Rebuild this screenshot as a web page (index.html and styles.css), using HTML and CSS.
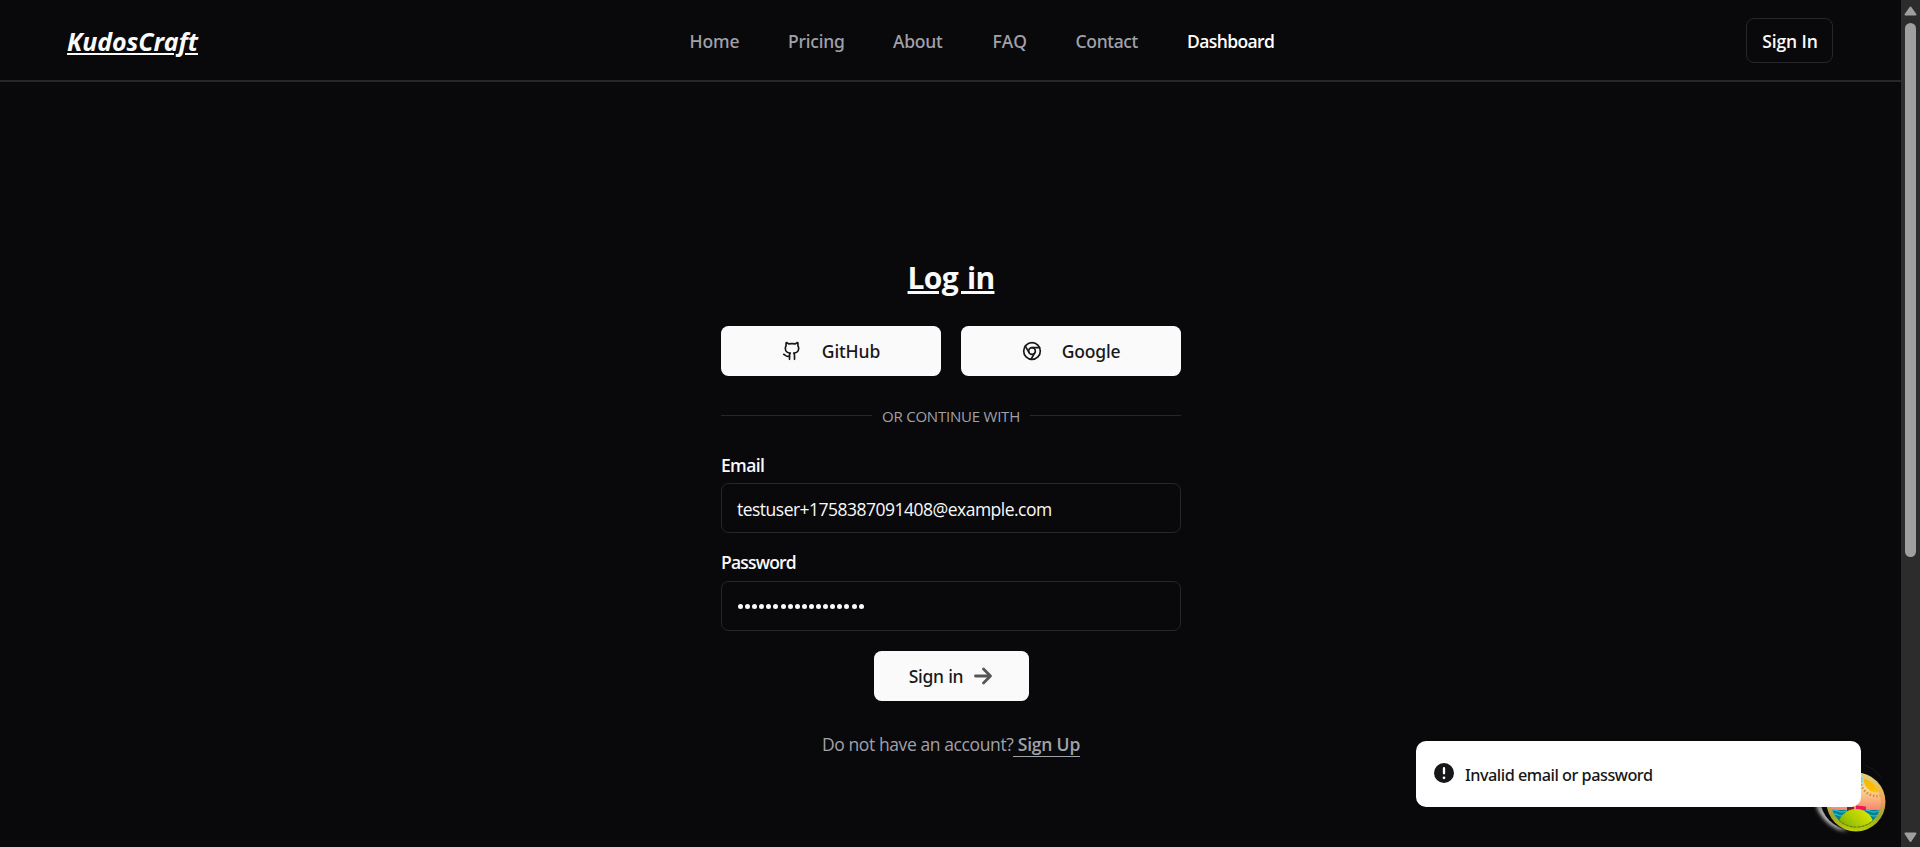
FILE: index.html
```html
<!DOCTYPE html>
<html lang="en">
<head>
<meta charset="utf-8">
<title>KudosCraft</title>
<link rel="stylesheet" href="styles.css">
</head>
<body>
<div class="page">
  <header class="header">
    <a class="logo">KudosCraft</a>
    <nav class="nav">
      <a class="home">Home</a>
      <a class="pricing">Pricing</a>
      <a class="about">About</a>
      <a class="faq">FAQ</a>
      <a class="contact">Contact</a>
      <a class="dashboard">Dashboard</a>
    </nav>
    <button class="header-signin">Sign In</button>
  </header>
  <main class="login">
    <h1 class="title">Log in</h1>
    <div class="providers">
      <button class="provider">
        <svg class="icon" viewBox="0 0 24 24"><path d="M15 22v-4a4.8 4.8 0 0 0-1-3.5c3 0 6-2 6-5.500.08-1.250-.27-2.480-1-3.500.28-1.150.28-2.350 0-3.500 0 0-1 0-3 1.500-2.640-.5-5.360-.5-8 0C6 2 5 2 5 2c-.3 1.150-.3 2.350 0 3.500A5.403 5.403 0 0 0 4 9c0 3.500 3 5.500 6 5.500-.39.49-.68 1.050-.85 1.650-.17.6-.22 1.230-.15 1.850v4"/><path d="M9 18c-4.510 2-5-2-7-2"/></svg>
        <span class="github-text">GitHub</span>
      </button>
      <button class="provider">
        <svg class="icon" viewBox="0 0 24 24"><circle cx="12" cy="12" r="10"/><circle cx="12" cy="12" r="4"/><path d="M21.170 8H12M3.950 6.060L8.540 14M10.880 21.940L15.460 14"/></svg>
        <span class="google-text">Google</span>
      </button>
    </div>
    <div class="divider"><span>OR CONTINUE WITH</span></div>
    <form class="form">
      <label class="label label-email">Email</label>
      <div class="field"><span class="email-value">testuser+1758387091408@example.com</span></div>
      <label class="label label-password">Password</label>
      <div class="field">
        <span class="dots"><i></i><i></i><i></i><i></i><i></i><i></i><i></i><i></i><i></i><i></i><i></i><i></i><i></i><i></i><i></i><i></i><i></i><i></i></span>
      </div>
      <button class="submit" type="button"><span>Sign in</span>
        <svg class="arrow" viewBox="0 0 20 20"><path d="M2.500 10H17M10.500 3L17.500 10L10.500 17"/></svg>
      </button>
    </form>
    <p class="signup"><span class="question">Do not have an account?</span><a class="signup-link">&nbsp;Sign Up</a></p>
  </main>
</div>

<div class="scrollbar">
  <svg class="scroll-arrow" viewBox="0 0 19 23"><path d="M9.500 7.500L14.500 14.500H4.500Z"/></svg>
  <div class="thumb"></div>
  <svg class="scroll-arrow" viewBox="0 0 19 23"><path d="M9.500 17L14.500 9.500H4.500Z"/></svg>
</div>

<svg class="devtools" viewBox="0 0 90 90">
  <defs>
    <linearGradient id="ring" x1="0" y1="0" x2="0" y2="1"><stop offset="0" stop-color="#d9d283"/><stop offset=".25" stop-color="#e8c05e"/><stop offset=".5" stop-color="#e9a05c"/><stop offset=".75" stop-color="#99a82d"/><stop offset="1" stop-color="#bfd000"/></linearGradient>
    <linearGradient id="sky" x1="0" y1="0" x2="0" y2="1"><stop offset="0" stop-color="#70dcef"/><stop offset=".22" stop-color="#eee0a5"/><stop offset=".48" stop-color="#f9ad7b"/><stop offset=".7" stop-color="#ff7771"/></linearGradient>
    <linearGradient id="hill" x1="1" y1="0" x2="0" y2="1"><stop offset="0" stop-color="#e8ef00"/><stop offset=".45" stop-color="#aaca00"/><stop offset="1" stop-color="#468a00"/></linearGradient>
    <linearGradient id="sun" x1="0" y1="0" x2="0" y2="1"><stop offset="0" stop-color="#ffa400"/><stop offset="1" stop-color="#ffc400"/></linearGradient>
    <clipPath id="scene"><circle cx="51" cy="47" r="25"/></clipPath>
    <filter id="soft" x="-50%" y="-50%" width="200%" height="200%"><feGaussianBlur stdDeviation="2.200"/></filter>
  </defs>
  <path d="M11 49Q17 66 33 74L43 76Q25 68 15 50Z" fill="#fff" filter="url(#soft)"/>
  <circle cx="46" cy="44" r="30.500" fill="#09090b"/>
  <path d="M60 10Q69 13 76 22" fill="none" stroke="#18181a"/>
  <circle cx="51" cy="47" r="29.500" fill="url(#ring)"/>
  <g clip-path="url(#scene)">
    <circle cx="51" cy="47" r="25" fill="url(#sky)"/>
    <circle cx="71.500" cy="25" r="12.500" fill="url(#sun)"/>
    <circle cx="71.500" cy="25" r="16" fill="none" stroke="#f57c1c" stroke-width="2.500" stroke-dasharray="1.400 2"/>
    <path d="M25 55H78V74H25Z" fill="#087e8d"/>
    <path d="M25 56q4-2 8 0t8 0 8 0 8 0 8 0 8 0 8 0M25 60q4-2 8 0t8 0 8 0 8 0 8 0 8 0 8 0" fill="none" stroke="#14c5d4" stroke-width="1.300"/>
    <path d="M42 52h7v4h-7Z" fill="#702a22"/>
    <path d="M51 50.500l10 1v4H51Z" fill="#ed185d"/>
    <circle cx="51" cy="72" r="18" fill="url(#hill)"/>
  </g>
  <path d="M34 65.500A25 25 0 0 0 68 65.500" fill="none" stroke="#466f00" stroke-width=".8" stroke-dasharray="3 1"/>
</svg>

<div class="toast">
  <svg class="alert" viewBox="0 0 20 20"><path fill="#171719" fill-rule="evenodd" d="M20 10a10 10 0 1 1-20 0 10 10 0 0 1 20 0ZM10 4a1.150 1.150 0 0 0-1.150 1.150v5.200a1.150 1.150 0 0 0 2.300 0v-5.200A1.150 1.150 0 0 0 10 4ZM10 16.200a1.350 1.350 0 1 0 0-2.700 1.350 1.350 0 0 0 0 2.700Z"/></svg>
  <span>Invalid email or password</span>
</div>
</body>
</html>
```

FILE: styles.css
```css
* { box-sizing: border-box; }
body {
  margin: 0;
  width: 1920px;
  height: 847px;
  overflow: hidden;
  display: flex;
  background: #09090b;
  color: #fafafa;
  font: 400 17.5px/25px "Open Sans", "Noto Sans", sans-serif;
  white-space: nowrap;
}
button {
  border: 0;
  padding: 0;
  font: inherit;
  color: inherit;
  display: flex;
  align-items: center;
  justify-content: center;
}
.page { width: 1901px; height: 847px; flex: none; }

.header {
  height: 82px;
  border-bottom: 2px solid #27272a;
  padding: 0 68px 0 67px;
  display: flex;
  align-items: center;
}
.logo {
  width: 132px;
  padding-top: 3px;
  font: italic 700 25px/35px "Open Sans", sans-serif;
  letter-spacing: -0.1px;
  text-decoration: underline;
  text-decoration-thickness: 2px;
  text-underline-offset: 2px;
}
.nav {
  display: flex;
  width: 590px;
  margin-left: 490.5px;
  padding-top: 2px;
  color: #a1a1aa;
  font-family: "Noto Sans", sans-serif;
  font-weight: 500;
}
.home { width: 98.5px; letter-spacing: -0.12px; }
.pricing { width: 105px; letter-spacing: -0.18px; }
.about { width: 99.5px; letter-spacing: -0.22px; }
.faq { width: 83px; letter-spacing: 0.4px; }
.contact { width: 111.5px; letter-spacing: -0.33px; }
.dashboard { color: #fff; font-family: "Open Sans", sans-serif; font-weight: 600; letter-spacing: -0.62px; }
.header-signin {
  width: 87px;
  height: 45px;
  margin-left: auto;
  background: transparent;
  border: 1px solid #27272a;
  border-radius: 8px;
  font-weight: 600;
  letter-spacing: -0.1px;
  padding: 2px 0 0 1px;
}

.login {
  width: 460px;
  margin-left: 721px;
  padding-top: 177px;
}
.title {
  margin: 0;
  height: 67px;
  text-align: center;
  font: 700 30px/38px "Open Sans", sans-serif;
  letter-spacing: -0.7px;
  word-spacing: 2px;
  text-decoration: underline;
  text-decoration-thickness: 3px;
  text-underline-offset: 2px;
}
.providers { display: grid; grid-template-columns: 1fr 1fr; gap: 20px; }
.provider {
  height: 50px;
  gap: 20px;
  border-radius: 7.5px;
  background: #fafafa;
  color: #18181b;
  font-family: "Noto Sans", sans-serif;
  font-weight: 500;
}
.github-text { letter-spacing: -0.1px; }
.google-text { letter-spacing: -0.18px; }
.icon {
  width: 20px;
  height: 20px;
  fill: none;
  stroke: #18181b;
  stroke-width: 2;
  stroke-linecap: round;
  stroke-linejoin: round;
}
.divider {
  display: flex;
  align-items: center;
  gap: 10px;
  height: 20px;
  margin-top: 29px;
  color: #a1a1aa;
  font-size: 15px;
  line-height: 20px;
  letter-spacing: -0.22px;
}
.divider span { padding-top: 1px; }
.divider::before, .divider::after {
  content: "";
  flex: 1;
  height: 1px;
  background: #27272a;
}
.form { display: flex; flex-direction: column; }
.label { font-weight: 600; line-height: 18px; }
.label-email { margin-top: 31px; height: 27px; letter-spacing: -0.65px; }
.label-password { margin-top: 20px; height: 28px; letter-spacing: -0.8px; }
.field {
  height: 50px;
  border: 1px solid #27272a;
  border-radius: 7.5px;
  padding: 3px 15px 0;
  display: flex;
  align-items: center;
}
.email-value { letter-spacing: -0.51px; }
.dots { display: flex; gap: 2.1px; padding: 0 0 2px 1px; }
.dots i { width: 5px; height: 5px; border-radius: 50%; background: #fafafa; }
.submit {
  align-self: center;
  width: 155px;
  height: 50px;
  margin-top: 20px;
  gap: 10px;
  border-radius: 7.5px;
  background: #fafafa;
  color: #18181b;
  font-family: "Noto Sans", sans-serif;
  font-weight: 500;
  letter-spacing: -0.25px;
}
.arrow {
  width: 20px;
  height: 20px;
  fill: none;
  stroke: #565659;
  stroke-width: 2.8;
  stroke-linecap: round;
  stroke-linejoin: round;
}
.signup {
  margin: 30px 0 0;
  display: flex;
  justify-content: center;
  color: #a1a1aa;
}
.question { padding-top: 1px; letter-spacing: -0.4px; }
.signup-link {
  height: 26px;
  padding-top: 1px;
  font-weight: 600;
  letter-spacing: -0.2px;
  border-bottom: 1px solid #a1a1aa;
}

.scrollbar {
  width: 19px;
  height: 847px;
  flex: none;
  background: #2c2c2c;
  display: grid;
  grid-template-rows: 23px 1fr 23px;
  justify-items: center;
}
.scroll-arrow { width: 19px; height: 23px; fill: #9f9f9f; stroke: #9f9f9f; stroke-width: 2; stroke-linejoin: round; }
.thumb { width: 11px; height: 534px; border-radius: 5.5px; background: #9f9f9f; }

.devtools { position: absolute; left: 1805px; top: 755px; width: 90px; height: 90px; }
.toast {
  position: absolute;
  left: 1416px;
  top: 741px;
  width: 445px;
  height: 66px;
  border-radius: 10px;
  background: #fff;
  color: #171717;
  display: flex;
  align-items: center;
  gap: 11px;
  padding: 0 18px;
  font-family: "Noto Sans", sans-serif;
  font-size: 16.25px;
  font-weight: 500;
  letter-spacing: -0.49px;
}
.toast span { padding-top: 3px; }
.alert { width: 20px; height: 20px; margin-bottom: 2px; }
```
